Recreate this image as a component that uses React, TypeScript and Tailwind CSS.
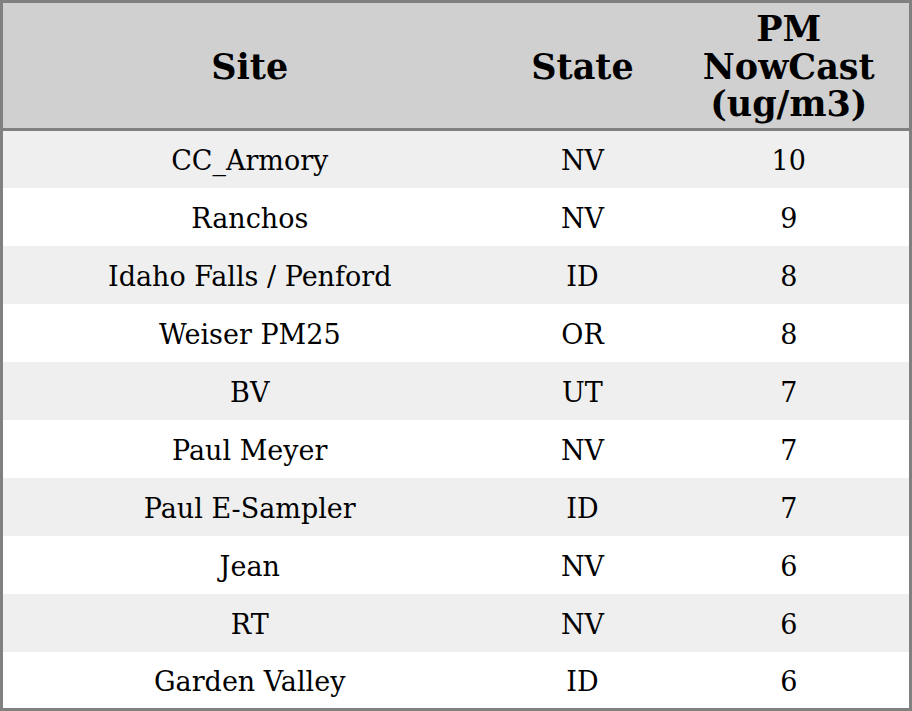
const rows: [string, string, number][] = [
  ["CC_Armory", "NV", 10],
  ["Ranchos", "NV", 9],
  ["Idaho Falls / Penford", "ID", 8],
  ["Weiser PM25", "OR", 8],
  ["BV", "UT", 7],
  ["Paul Meyer", "NV", 7],
  ["Paul E-Sampler", "ID", 7],
  ["Jean", "NV", 6],
  ["RT", "NV", 6],
  ["Garden Valley", "ID", 6],
];

export default function App() {
  return (
    <div className="w-[912px] h-[711px] bg-white" style={{ fontFamily: '"DejaVu Serif", serif' }}>
      <table className="w-[912px] border-[3px] border-[#808080] border-collapse table-fixed text-black">
        <colgroup>
          <col className="w-[495px]" />
          <col className="w-[172px]" />
          <col className="w-[242px]" />
        </colgroup>
        <thead>
          <tr className="bg-[#d0d0d0] h-[128px] border-b-[3px] border-[#808080]">
            <th className="text-[35px] leading-[37.5px] font-bold text-center pt-[2px]">Site</th>
            <th className="text-[35px] leading-[37.5px] font-bold text-center pt-[2px]">State</th>
            <th className="text-[35px] leading-[37.5px] font-bold text-center pt-[2px]">
              PM
              <br />
              NowCast
              <br />
              (ug/m3)
            </th>
          </tr>
        </thead>
        <tbody>
          {rows.map(([site, state, pm], i) => (
            <tr key={site} className={i % 2 === 0 ? "bg-[#efefef] h-[58px]" : "bg-white h-[58px]"}>
              <td className="text-[27px] leading-[32px] text-center pt-[4px]">{site}</td>
              <td className="text-[27px] leading-[32px] text-center pt-[4px]">{state}</td>
              <td className="text-[27px] leading-[32px] text-center pt-[4px]">{pm}</td>
            </tr>
          ))}
        </tbody>
      </table>
    </div>
  );
}
